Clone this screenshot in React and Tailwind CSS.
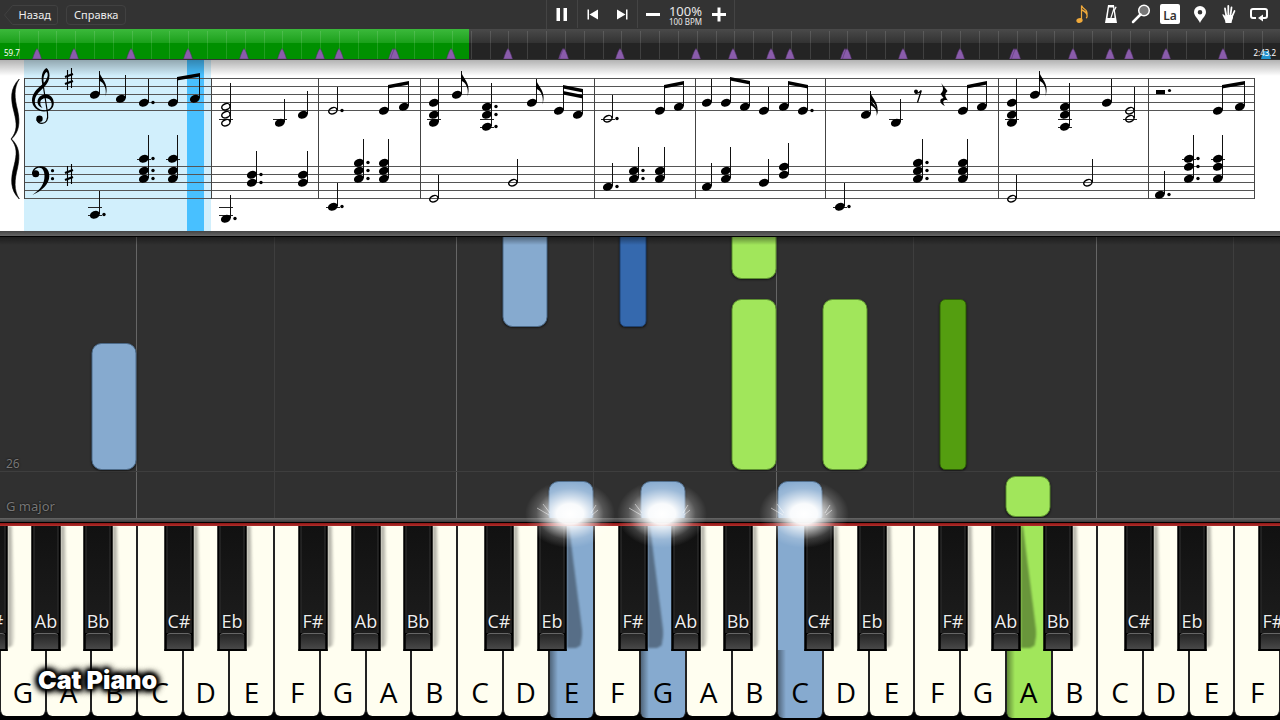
import React from 'react';
import clsx from 'clsx';

const WHITE_NAMES = ['G', 'A', 'B', 'C', 'D', 'E', 'F'];
const WHITE_COUNT = 28;
const OCTAVE = 320;
const SPAN = 1280;

// centre of every black key inside one octave that starts on G
const BLACK_KEYS = [
  { name: 'F#', at: -7 },
  { name: 'Ab', at: 46 },
  { name: 'Bb', at: 98 },
  { name: 'C#', at: 179 },
  { name: 'Eb', at: 232 },
];

const PRESSED = { 12: 'blue', 14: 'blue', 17: 'blue', 22: 'green' };
const HELD_BLACK = [553, 633, 1006];

const MARKERS = [
  37, 74, 131, 188, 244, 282, 320, 339, 393, 395, 451, 508, 563, 564, 620, 696, 733, 771, 790,
  845, 847, 903, 960, 1014, 1016, 1073, 1110, 1129, 1166, 1223,
];

const FALLING = [
  { at: 114, bottom: 48, height: 127, tone: 'blue' },
  { at: 525, bottom: 191, height: 110, tone: 'blue' },
  { at: 633, bottom: 191, height: 110, tone: 'navy' },
  { at: 754, bottom: 239, height: 60, tone: 'green' },
  { at: 754, bottom: 48, height: 171, tone: 'green' },
  { at: 845, bottom: 48, height: 171, tone: 'green' },
  { at: 953, bottom: 48, height: 171, tone: 'moss' },
  { at: 571, bottom: -8, height: 45, tone: 'blue' },
  { at: 663, bottom: -8, height: 45, tone: 'blue' },
  { at: 800, bottom: -8, height: 45, tone: 'blue' },
  { at: 1028, bottom: 1, height: 41, tone: 'green' },
];

const TONES = {
  blue: 'w-[45px] rounded-[10px] bg-[#86aacf] border-[#4d6b8a]',
  navy: 'w-[27px] rounded-md bg-[#3569ae] border-[#1f4272]',
  green: 'w-[45px] rounded-[10px] bg-[#a1e65b] border-[#5d9130]',
  moss: 'w-[27px] rounded-md bg-[#549e10] border-[#2f5f06]',
};

const BARLINES = [24, 211, 318, 420, 594, 695, 825, 998, 1148, 1254];

// y lists the heads of one chord; top is the end of the stem
const TREBLE = [
  { x: 95, y: [95], top: 71, flags: 1 },
  { x: 121, y: [99], top: 75 },
  { x: 144, y: [103], top: 79, dot: true },
  { x: 173, y: [103], top: 79 },
  { x: 195, y: [99], top: 75 },
  { x: 226, y: [107, 115, 123], top: 83, open: true },
  { x: 280, y: [123], top: 99 },
  { x: 303, y: [115], top: 91 },
  { x: 333, y: [111], top: 87, open: true, dot: true },
  { x: 384, y: [111], top: 87 },
  { x: 404, y: [107], top: 83 },
  { x: 434, y: [103, 115, 123], top: 79 },
  { x: 457, y: [95], top: 71, flags: 1 },
  { x: 487, y: [107, 115, 127], top: 83, dot: true },
  { x: 532, y: [103], top: 79, flags: 1 },
  { x: 559, y: [111], top: 87 },
  { x: 578, y: [115], top: 91 },
  { x: 608, y: [119], top: 95, open: true, dot: true },
  { x: 660, y: [111], top: 87 },
  { x: 679, y: [107], top: 83 },
  { x: 707, y: [103], top: 79 },
  { x: 726, y: [103], top: 79 },
  { x: 745, y: [107], top: 83 },
  { x: 764, y: [111], top: 87 },
  { x: 784, y: [107], top: 83 },
  { x: 803, y: [111], top: 87, dot: true },
  { x: 866, y: [115], top: 91, flags: 2 },
  { x: 896, y: [123], top: 99 },
  { x: 963, y: [111], top: 87 },
  { x: 982, y: [107], top: 83 },
  { x: 1012, y: [103, 115, 123], top: 79 },
  { x: 1035, y: [95], top: 71, flags: 1 },
  { x: 1065, y: [107, 115, 127], top: 83 },
  { x: 1107, y: [103], top: 79 },
  { x: 1130, y: [111, 119], top: 87, open: true },
  { x: 1218, y: [111], top: 87 },
  { x: 1240, y: [107], top: 83 },
];

const BASS = [
  { x: 95, y: [215], top: 191, dot: true },
  { x: 144, y: [159, 171, 179], top: 135, dot: true },
  { x: 173, y: [159, 171, 179], top: 135 },
  { x: 226, y: [219], top: 195, dot: true },
  { x: 252, y: [175, 183], top: 151, dot: true },
  { x: 303, y: [175, 183], top: 151 },
  { x: 333, y: [207], top: 183, dot: true },
  { x: 359, y: [163, 171, 179], top: 139, dot: true },
  { x: 384, y: [163, 171, 179], top: 139 },
  { x: 434, y: [199], top: 175, open: true },
  { x: 513, y: [183], top: 159, open: true },
  { x: 608, y: [187], top: 163, dot: true },
  { x: 634, y: [171, 179], top: 147, dot: true },
  { x: 660, y: [171, 179], top: 147 },
  { x: 707, y: [187], top: 163 },
  { x: 726, y: [171, 179], top: 147 },
  { x: 764, y: [183], top: 159 },
  { x: 784, y: [167, 175], top: 143 },
  { x: 840, y: [207], top: 183, dot: true },
  { x: 918, y: [163, 171, 179], top: 139, dot: true },
  { x: 963, y: [163, 171, 179], top: 139 },
  { x: 1012, y: [199], top: 175, open: true },
  { x: 1088, y: [183], top: 159, open: true },
  { x: 1160, y: [195], top: 171, dot: true },
  { x: 1189, y: [159, 167, 179], top: 135, dot: true },
  { x: 1218, y: [159, 167, 179], top: 135 },
];

const BEAMS = [
  [177, 79, 200, 75],
  [388, 87, 409, 83],
  [563, 87, 583, 91],
  [563, 93, 583, 97],
  [664, 87, 684, 83],
  [730, 79, 750, 83],
  [788, 83, 808, 87],
  [967, 87, 987, 83],
  [1222, 87, 1245, 83],
];

const pct = (x) => `${(x / SPAN) * 100}%`;

/* ---------- Sheet music ---------- */

const ledgersFor = (heads, bass) =>
  (bass ? [159, 207, 215] : [119, 127]).filter((line) =>
    line < 160 && bass ? heads.some((y) => y <= line) : heads.some((y) => y >= line)
  );

const Chord = ({ note, bass }) => {
  const { x, y, top, open, dot, flags = 0 } = note;
  const stem = x + 4.5;
  return (
    <g>
      {ledgersFor(y, bass).map((line) => (
        <path key={line} d={`M${x - 7} ${line + 0.5}h14`} stroke="#222" strokeWidth="1" />
      ))}
      <path d={`M${stem} ${y[y.length - 1] - 1}V${top}`} stroke="#111" strokeWidth="1" />
      {y.map((cy) => (
        <g key={cy}>
          <ellipse
            cx={x}
            cy={cy - 0.3}
            rx={open ? 4.3 : 5.1}
            ry={open ? 3 : 3.8}
            transform={`rotate(-22 ${x} ${cy})`}
            fill={open ? 'none' : '#000'}
            stroke={open ? '#000' : 'none'}
            strokeWidth="1.5"
          />
          {dot && <circle cx={x + 9} cy={cy - 0.5} r="1.7" />}
        </g>
      ))}
      {flags > 0 && (
        <path d={`M${stem - 0.5} ${top}c1 7 11 12 6.500 25.500c1.500-9-2-14-6.500-16z`} />
      )}
      {flags > 1 && (
        <path d={`M${stem - 0.5} ${top + 7}c1 6 10 9 7 17c0-6-3-8-7-10z`} />
      )}
    </g>
  );
};

const Sharp = ({ x, y }) => (
  <g transform={`translate(${x} ${y})`} fill="none" stroke="#000">
    <path d="M-1.500-9v20M2.500-11v20" strokeWidth="1.100" />
    <path d="M-4-2l8-3M-4 5l8-3" strokeWidth="2.300" />
  </g>
);

const TrebleClef = () => (
  <g>
    <path
      fillRule="evenodd"
      d="M46.300 68C42 71 40.800 77 42.300 84.500C36 89.500 32 94 32 100.500C32 107 38 111.500 44 111.500C50 111.500 53.800 108 53.800 103C53.800 98 50 94.300 46 94.300C41 94.300 37.500 98 37.500 102C37.500 105 39.500 107 42.500 108C40.700 106 40.300 104.500 40.300 103C40.300 99.800 42.800 98.300 45.500 98.300C49.500 98.300 51.700 101 51.700 104.300C51.700 108 48.500 110.300 44.500 110.300C39 110.300 34.800 106.500 34.800 101.500C34.800 96 39 92 44 87.300C47.500 83.800 49.500 80 49.500 75.500C49.500 72 48.300 69 46.300 68ZM46.800 72C48.500 74 48 78.500 43.800 82.800C42.800 77.500 44.500 73 46.800 72Z"
    />
    <path d="M43 84L47.500 113C48.500 120 46 123.300 42 123.300C39.500 123.300 37.500 122 36.800 119.500" fill="none" stroke="#000" strokeWidth="1.200" />
    <circle cx="39.500" cy="118.700" r="3.200" />
  </g>
);

const BassClef = () => (
  <g>
    <path d="M32 174C32 169 36 166.300 40.500 166.300C46.500 166.300 49.300 170.500 49.300 176C49.300 184 42 191 32.300 195C40 190 44.500 184 44.500 176C44.500 171 42.500 167.800 39.500 167.800C36 167.800 33.500 170.500 33.500 174Z" />
    <circle cx="35.700" cy="173.700" r="3.500" />
    <circle cx="52.500" cy="170.700" r="1.600" />
    <circle cx="52.500" cy="178.700" r="1.600" />
  </g>
);

const Score = () => (
  <section aria-label="Score" className="relative bg-white">
    <svg viewBox="0 60 1280 171" className="block h-[171px] w-full">
      <rect x="24" y="60" width="187" height="171" fill="#d1effc" />
      <rect x="187" y="60" width="17" height="171" fill="#48c0ff" />
      {[79, 87, 95, 103, 111, 167, 175, 183, 191, 199].map((y) => (
        <path key={y} d={`M24 ${y - 0.5}H1255`} stroke="#555" strokeWidth="1" />
      ))}
      {BARLINES.map((x) => (
        <path key={x} d={`M${x + 0.5} 78V199`} stroke="#444" strokeWidth="1" />
      ))}
      <path d="M19.300 79C10 88 10.500 99 14 112C17 124 17.500 131 11 139C17.500 147 17 154 14 166C10.500 179 10 190 19.300 199C13.500 190 14.500 180 17.500 168C20.500 155 19 146 11.500 139C19 132 20.500 123 17.500 110C14.500 98 13.500 88 19.300 79Z" stroke="#000" strokeWidth="0.600" />
      <TrebleClef />
      <BassClef />
      <Sharp x={69} y={79} />
      <Sharp x={69} y={175} />
      {TREBLE.map((note) => <Chord key={note.x} note={note} />)}
      {BASS.map((note) => <Chord key={note.x} note={note} bass />)}
      {BEAMS.map(([x1, y1, x2, y2]) => (
        <path key={`${x1}-${y1}`} d={`M${x1} ${y1 - 2}L${x2} ${y2 - 2}V${y2 + 1.5}L${x1} ${y1 + 1.5}Z`} />
      ))}
      {/* rests */}
      <circle cx="916" cy="91.500" r="2" />
      <path d="M915 93C918 94 920 92 921.300 90.500L917.500 102.500" fill="none" stroke="#000" strokeWidth="1.300" />
      <path d="M941 83L947.500 91C944.500 94.500 944.500 96 948 100.500C943.500 99 941.500 102 945 106C939 103.500 939 98.500 943.500 98L940.500 94C943.500 91 944 88 941 83Z" />
      <path d="M1156 90h9v4h-9z" />
      <circle cx="1169.500" cy="90.500" r="1.600" />
    </svg>
    <div className="pointer-events-none absolute inset-x-0 top-0 h-4 bg-gradient-to-b from-black/30 to-transparent" />
  </section>
);

/* ---------- Toolbar ---------- */

const ToolButton = ({ label, className, children }) => (
  <button type="button" aria-label={label} className={clsx('flex h-full items-center justify-center text-white', className)}>
    {children}
  </button>
);

const Icon = ({ children, className = 'size-5' }) => (
  <svg viewBox="0 0 20 20" fill="currentColor" className={className}>{children}</svg>
);

const Toolbar = () => (
  <header className="grid h-[29px] grid-cols-[1fr_auto_1fr] items-center bg-[#333]">
    <nav className="flex items-center gap-2 pl-1 text-[11px] leading-4 text-[#eee]">
      <button type="button" className="relative flex h-5 w-[54px] items-center justify-end pr-[7px]">
        <svg viewBox="0 0 54 20" className="absolute inset-0 h-5 w-[54px]" fill="none" stroke="#414141">
          <path d="M8.500.5H51q2.500 0 2.500 2.500V17q0 2.500-2.500 2.500H8.500L.5 10Z" />
        </svg>
        <span className="relative">Назад</span>
      </button>
      <button type="button" className="h-5 rounded border border-[#414141] px-[7px]">Справка</button>
    </nav>

    <div className="flex h-[29px] divide-x divide-[#444] border-x border-[#444] pb-px">
      <ToolButton label="Pause" className="w-[31px]">
        <Icon><path d="M4.500 4h3.500v13H4.500zM11.500 4H15v13h-3.500z" /></Icon>
      </ToolButton>
      <div className="flex">
        <ToolButton label="Previous" className="w-[30px]">
          <Icon><path d="M4.500 5.500h1.500v10H4.500zM15 5.500v10L6.500 10.500z" /></Icon>
        </ToolButton>
        <ToolButton label="Next" className="w-[29px]">
          <Icon><path d="M14 5.500h1.500v10H14zM5 5.500v10l8.500-5z" /></Icon>
        </ToolButton>
      </div>
      <div className="flex items-center">
        <ToolButton label="Slower" className="w-[30px]">
          <Icon><path d="M3 9h14v3H3z" /></Icon>
        </ToolButton>
        <div className="flex w-[36px] flex-col items-center pt-0.5 text-[#e8e8e8]">
          <span className="text-[13px] leading-[14px]">100%</span>
          <span className="text-[8px] leading-[8px] whitespace-nowrap">100 BPM</span>
        </div>
        <ToolButton label="Faster" className="w-[30px]">
          <Icon><path d="M3 9h5.500V3.500h3V9H17v3h-5.500v5.500h-3V12H3z" /></Icon>
        </ToolButton>
      </div>
    </div>

    <div className="mr-[7px] flex h-[29px] w-[206px] justify-between justify-self-end pb-px">
      <ToolButton label="Notes" className="w-[29px]">
        <Icon className="size-5 text-[#f0a93a]">
          <ellipse cx="7.500" cy="16.500" rx="3.200" ry="2.300" transform="rotate(-20 7.500 16.500)" />
          <path d="M9.500 16.500V1.500q1 2.500 3.500 4t2 6q0-3-5.500-5.500M9.500 5.500q5 2 5.500 5t-1 3.500" fill="none" stroke="currentColor" strokeWidth="1.200" />
        </Icon>
      </ToolButton>
      <ToolButton label="Metronome" className="w-[29px]">
        <Icon>
          <path fillRule="evenodd" d="M7 1h6l3 18H4zM8 3.500L6.500 14h2.800L12.300 4.500L12 3.500zM12.800 7L10.500 14h3z" />
          <path d="M14.500 2.500l1.200.5-2 4-1-.5z" />
        </Icon>
      </ToolButton>
      <ToolButton label="Zoom" className="w-[29px]">
        <Icon>
          <circle cx="13" cy="6.500" r="5.300" fill="#777" stroke="currentColor" strokeWidth="1.500" />
          <path d="M9.500 10.500L2 18" stroke="currentColor" strokeWidth="2.500" strokeLinecap="round" />
        </Icon>
      </ToolButton>
      <ToolButton label="Note names" className="w-[29px]">
        <span className="flex size-5 items-end justify-center rounded-xs bg-white text-[12px] leading-[17px] font-semibold text-[#333]">La</span>
      </ToolButton>
      <ToolButton label="Bookmark" className="w-[29px]">
        <Icon><path fillRule="evenodd" d="M10 2a6 6 0 0 1 6 6c0 4-4.500 7-6 11C8.500 15 4 12 4 8a6 6 0 0 1 6-6zm0 4a2.300 2.300 0 1 0 0 4.600A2.300 2.300 0 0 0 10 6z" /></Icon>
      </ToolButton>
      <ToolButton label="Hands" className="w-[29px]">
        <Icon>
          <path d="M6.500 19C6.300 15 4 13 3.300 10.500Q4.500 9.800 6.500 12.500V11h7.500q.5 4-1 5.500L12.500 19z" />
          <path d="M7.300 12L6 4.500M9.300 11V2M11.500 11l1-7.500M13.300 12l2.200-5" fill="none" stroke="currentColor" strokeWidth="1.800" strokeLinecap="round" />
        </Icon>
      </ToolButton>
      <ToolButton label="Loop" className="w-[29px]">
        <Icon>
          <path d="M7 14H4q-2 0-2-2V7q0-2 2-2h12q2 0 2 2v5q0 2-2 2h-3" fill="none" stroke="currentColor" strokeWidth="2" />
          <path d="M14 10.500v7L9 14z" />
        </Icon>
      </ToolButton>
    </div>
  </header>
);

const Timeline = () => (
  <section aria-label="Timeline" className="relative h-[31px] border-b border-[#333] bg-gradient-to-b from-[#4a4a4a] via-[#333] via-45% to-[#2b2b2b]">
    <div className="absolute inset-x-0 bottom-0 h-4 bg-[#242424]" />
    <div className="absolute inset-y-0 left-0 bg-gradient-to-b from-[#3bb93b] via-[#1ba11b] via-45% to-[#089208]" style={{ width: pct(469) }}>
      <div className="absolute inset-x-0 bottom-0 h-4 bg-[#009000]" />
    </div>
    <svg viewBox="0 0 1280 30" preserveAspectRatio="none" className="absolute inset-0 h-full w-full">
      {Array.from({ length: 67 }, (_, i) => (
        <path key={i} d={`M${Math.round((i + 1) * 18.83) + 0.5} 2V30`} stroke="#fff" strokeOpacity="0.130" />
      ))}
      {MARKERS.map((x) => (
        <path key={x} d={`M${x} 19.500q2 2 4.500 10.500h-9q2.500-8.500 4.500-10.500z`} fill="#8a5cab" stroke="#503068" strokeWidth="0.500" />
      ))}
      <path d="M1261 30l2-8h6l2 8z" fill="#2293cf" />
    </svg>
    <div className="absolute inset-x-1 bottom-0 flex justify-between text-[8px] leading-[13px] text-white">
      <span>59.7</span>
      <span>2:43.2</span>
    </div>
  </section>
);

/* ---------- Piano roll ---------- */

const Roll = () => (
  <section aria-label="Falling notes" className="relative flex min-h-[281px] flex-1 overflow-hidden bg-[#303030]">
    {Array.from({ length: WHITE_COUNT }, (_, i) => (
      <div
        key={i}
        className={clsx('flex-1', i % 7 === 3 && 'border-l border-[#666]', i % 7 === 6 && 'border-l border-[#3e3e3e]')}
      />
    ))}
    <div className="absolute inset-x-0 bottom-[46px] border-t border-[#3e3e3e]" />
    <div className="absolute bottom-0 left-1.5 flex flex-col text-[#777] [text-shadow:0_0_2px_#000]">
      <span className="mb-6 text-[12px] leading-[18px]">26</span>
      <span className="mb-[3px] text-[13px] leading-[18px]">G major</span>
    </div>
    {FALLING.map(({ at, bottom, height, tone }) => (
      <div
        key={`${at}-${bottom}`}
        className={clsx('absolute -translate-x-1/2 border shadow-[0_1px_2px_#0008]', TONES[tone])}
        style={{ left: pct(at), bottom, height }}
      />
    ))}
    <div className="absolute inset-x-0 top-0 h-2 bg-gradient-to-b from-black/40 to-transparent" />
  </section>
);

const Spark = ({ at }) => (
  <svg viewBox="0 0 100 80" className="pointer-events-none absolute top-[-48px] z-20 h-20 w-[100px] -translate-x-1/2" style={{ left: pct(at) }}>
    <defs>
      <radialGradient id="spark">
        <stop offset="0" stopColor="#fff" />
        <stop offset="0.300" stopColor="#fff" stopOpacity="0.950" />
        <stop offset="0.500" stopColor="#fff" stopOpacity="0.600" />
        <stop offset="0.750" stopColor="#fff" stopOpacity="0.180" />
        <stop offset="1" stopColor="#fff" stopOpacity="0" />
      </radialGradient>
    </defs>
    <ellipse cx="50" cy="44" rx="45" ry="34" fill="url(#spark)" />
    <path d="M29 45L17 38M30 43L23 34M71 43l5-8M72 45l6-5" stroke="#fff" strokeWidth="1" strokeOpacity="0.500" />
  </svg>
);

/* ---------- Keyboard ---------- */

const WhiteKey = ({ name, tone }) => (
  <button
    type="button"
    className={clsx(
      'relative flex min-w-0 flex-1 items-end justify-center rounded-b-md border-x border-[#222] text-[28px] leading-9 text-black',
      !tone && 'mb-1 bg-[#fffef0] pb-1.5',
      tone === 'blue' && 'mb-0.5 bg-[#86aacf] pb-2',
      tone === 'green' && 'mb-0.5 bg-[#a1e65b] pb-2'
    )}
  >
    {tone && <span className="absolute bottom-0 left-0 h-[68px] w-2 rounded-bl-md bg-gradient-to-r from-black/40 to-transparent" />}
    {name}
  </button>
);

const BlackKey = ({ name, at }) => {
  const held = HELD_BLACK.some((x) => Math.abs(x - at) < 3);
  return (
    <div className="absolute top-0 h-[125px] w-[29px] -translate-x-1/2" style={{ left: pct(at) }}>
      <span className="absolute top-0 left-full h-[122px] w-4 blur-[1px]">
        {held ? (
          <span className="block h-full bg-black/35 [clip-path:polygon(0_0,15%_0,100%_88%,88%_98%,60%_100%,0_100%)]" />
        ) : (
          <span className="block h-full w-2 bg-gradient-to-r from-black/40 to-transparent [clip-path:polygon(0_0,60%_0,100%_90%,70%_98%,0_100%)]" />
        )}
      </span>
      <button type="button" className="relative flex h-full w-full flex-col items-stretch justify-end border-x-2 border-b-2 border-black bg-black text-[#eee]">
        <span className="absolute inset-x-0 top-0 bottom-4 border-x border-[#3c3c3c] bg-gradient-to-b from-[#111] to-[#1d1d1d]" />
        <span className="relative self-center text-[18px] leading-6 whitespace-nowrap [text-shadow:0_1px_2px_#000]">{name}</span>
        <span className="relative h-4 rounded-t-sm border-t border-[#666] bg-gradient-to-b from-[#262626] to-[#484848]" />
      </button>
    </div>
  );
};

const Keyboard = () => {
  const blacks = [];
  for (let octave = 0; octave <= 4; octave += 1) {
    BLACK_KEYS.forEach(({ name, at }) => {
      const x = at + octave * OCTAVE;
      if (x < SPAN) blacks.push({ name, at: x });
    });
  }

  return (
    <section aria-label="Keyboard" className="relative bg-black font-['Open_Sans','Noto_Sans',sans-serif]">
      <div className="h-1 bg-gradient-to-b from-[#666] to-[#3c3c3c]" />
      <div className="mt-px h-[3px] bg-gradient-to-b from-[#8c1414] to-[#b3302c]" />
      <div className="relative h-[194px] overflow-hidden">
        <div className="flex h-full">
          {Array.from({ length: WHITE_COUNT }, (_, i) => (
            <WhiteKey key={i} name={WHITE_NAMES[i % 7]} tone={PRESSED[i]} />
          ))}
        </div>
        {blacks.map((key) => <BlackKey key={key.at} {...key} />)}
      </div>
      <Spark at={570} />
      <Spark at={662} />
      <Spark at={804} />
      <div className="absolute bottom-6 left-[38px] z-20 font-['Inter'] text-[25px] leading-8 font-black text-white [text-shadow:0_0_3px_#000,0_0_4px_#000,0_0_5px_#000,0_0_6px_#000,0_0_7px_#000,0_0_8px_#000,0_0_9px_#000,0_0_10px_#000]">
        Cat Piano
      </div>
    </section>
  );
};

const App = () => (
  <main className="flex min-h-screen flex-col overflow-hidden bg-black font-['Noto_Sans','Open_Sans',sans-serif]">
    <Toolbar />
    <Timeline />
    <Score />
    <div className="h-1.5 border-b border-black bg-gradient-to-b from-[#444] to-[#666]" />
    <Roll />
    <Keyboard />
  </main>
);

export default App;
